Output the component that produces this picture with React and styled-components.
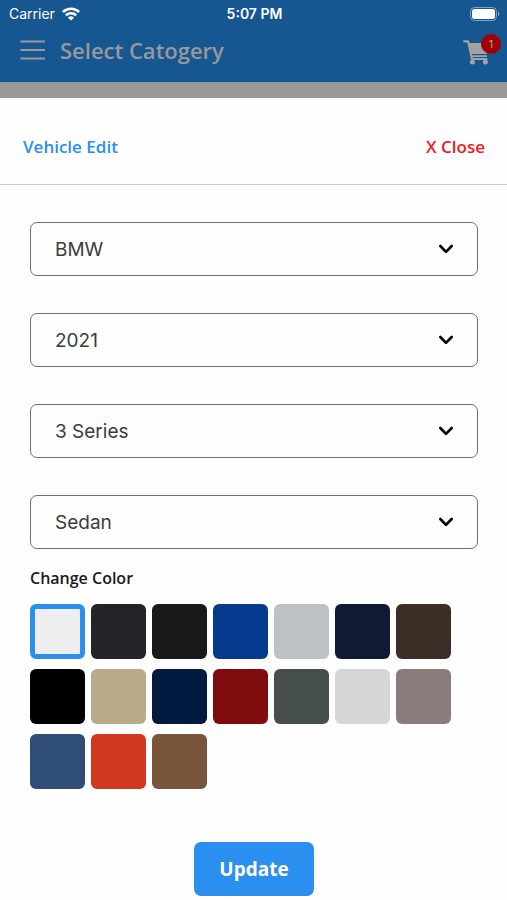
import React, { useState } from "react";
import styled, { createGlobalStyle } from "styled-components";

const GlobalStyle = createGlobalStyle`
	* {
		box-sizing: border-box;
	}

	body {
		margin: 0;
		background: #fefefe;
		font-family: "Open Sans", sans-serif;
	}
`;

const Container = styled.div`
	display: flex;
	flex-direction: column;
	min-height: 100vh;
	background: #999999;
`;

const Top = styled.header`
	height: 82px;
	background: #165691;
`;

const StatusBar = styled.div`
	display: grid;
	grid-template-columns: 1fr auto 1fr;
	align-items: center;
	height: 27px;
	padding: 0 7px 0 9px;
	color: white;
	font-family: Inter, sans-serif;
	font-size: 14px;
	line-height: 27px;
`;

const Carrier = styled.div`
	display: flex;
	align-items: center;
	gap: 7px;
`;

const Time = styled.div`
	font-weight: 600;
`;

const Battery = styled.svg`
	justify-self: end;
	display: block;
`;

const NavBar = styled.div`
	display: flex;
	align-items: center;
	height: 46px;
	padding: 0 18px 0 20px;
`;

const IconButton = styled.button`
	display: flex;
	position: relative;
	padding: 0;
	border: none;
	background: none;
	cursor: pointer;
`;

const Title = styled.h1`
	flex: 1;
	margin: 0 0 0 14px;
	color: #999999;
	font-size: 22px;
	font-weight: 600;
	line-height: 30px;
`;

const Badge = styled.span`
	position: absolute;
	top: -1px;
	right: -12px;
	width: 20px;
	height: 20px;
	border-radius: 50%;
	background: #a30006;
	color: #a3a3a3;
	font-family: Inter, sans-serif;
	font-size: 11px;
	line-height: 20px;
	text-align: center;
`;

const Sheet = styled.main`
	flex: 1;
	margin-top: 16px;
	background: #fefefe;
`;

const SheetHead = styled.div`
	display: flex;
	align-items: center;
	justify-content: space-between;
	height: 87px;
	padding: 12px 22px 0 23px;
	border-bottom: 1px solid #cccccc;
`;

const SheetTitle = styled.h2`
	margin: 0;
	color: #2a8fee;
	font-size: 17px;
	font-weight: 600;
	line-height: 24px;
`;

const Close = styled.button`
	padding: 0;
	border: none;
	background: none;
	color: #f0191c;
	font-family: inherit;
	font-size: 17px;
	font-weight: 600;
	line-height: 24px;
	cursor: pointer;
`;

const Form = styled.form`
	display: flex;
	flex-direction: column;
	gap: 37px;
	padding: 37px 29px 4px 30px;
`;

const Field = styled.label`
	display: grid;
	align-items: center;

	> * {
		grid-area: 1 / 1;
	}
`;

const Select = styled.select`
	appearance: none;
	width: 100%;
	height: 54px;
	padding: 0 56px 0 24px;
	border: 1px solid #6e6e6e;
	border-radius: 7px;
	background: transparent;
	color: #3c3c3c;
	font-family: Inter, sans-serif;
	font-size: 19px;
`;

const Chevron = styled.svg`
	justify-self: end;
	margin-right: 24px;
	pointer-events: none;
`;

const Colors = styled.fieldset`
	min-width: 0;
	margin: -20px 0 0;
	padding: 0;
	border: none;
`;

const Legend = styled.legend`
	margin-bottom: 14px;
	padding: 0;
	color: #1a1a1a;
	font-size: 16px;
	font-weight: 600;
	line-height: 24px;
`;

const Swatches = styled.div`
	display: flex;
	flex-wrap: wrap;
	gap: 10px 6px;
`;

const Swatch = styled.input`
	appearance: none;
	width: 55px;
	height: 55px;
	margin: 0;
	border-radius: 6px;
	background: ${(props) => props.$color};
	cursor: pointer;

	&:checked {
		border: 5px solid #2a8fee;
	}
`;

const Update = styled.button`
	align-self: center;
	margin-top: 16px;
	padding: 12px 25px;
	border: none;
	border-radius: 7px;
	background: #2a8fee;
	color: white;
	font-family: inherit;
	font-size: 19px;
	font-weight: 700;
	line-height: 30px;
	cursor: pointer;
`;

const fields = [
	{ name: "Make", options: ["BMW"] },
	{ name: "Year", options: ["2021"] },
	{ name: "Model", options: ["3 Series"] },
	{ name: "Body", options: ["Sedan"] },
];

const colors = [
	"#eeeeee",
	"#222428",
	"#191919",
	"#053b8f",
	"#bcc1c4",
	"#101a35",
	"#3b2e26",
	"#000000",
	"#b8ab8c",
	"#001b3f",
	"#800c0f",
	"#474f4e",
	"#d6d6d6",
	"#897c7c",
	"#304d79",
	"#d13820",
	"#78563c",
];

const App = () => {
	const [color, setColor] = useState(colors[0]);

	return (
		<Container>
			<GlobalStyle />
			<Top>
				<StatusBar>
					<Carrier>
						Carrier
						<svg width="18" height="14" viewBox="0 0 18 14" fill="none" stroke="white" strokeWidth="2.6">
							<path d="M0.9 5a11.6 11.6 0 0 1 16.2 0" />
							<path d="M3.9 8.4a7.3 7.3 0 0 1 10.2 0" />
							<path d="M9 13.6 6 10.7a4.3 4.3 0 0 1 6 0z" fill="white" stroke="none" />
						</svg>
					</Carrier>
					<Time>5:07 PM</Time>
					<Battery width="30" height="14" viewBox="0 0 30 14">
						<rect x="0.5" y="0.5" width="26" height="13" rx="4" fill="none" stroke="#7fa3c5" />
						<rect x="2" y="2" width="23" height="10" rx="2.5" fill="white" />
						<path d="M28 4.8a2.4 2.4 0 0 1 0 4.4z" fill="#7fa3c5" />
					</Battery>
				</StatusBar>
				<NavBar>
					<IconButton aria-label="Menu">
						<svg width="26" height="20" viewBox="0 0 26 20" stroke="#999999" strokeWidth="2">
							<path d="M0.5 1.5h24.5M0.5 10h24.5M0.5 18.5h24.5" />
						</svg>
					</IconButton>
					<Title>Select Catogery</Title>
					<IconButton aria-label="Cart">
						<svg width="26" height="30" viewBox="0 0 26 30" fill="#a3a3a3">
							<path d="M1.2 6.3h3.9L9 24h14.5" fill="none" stroke="#a3a3a3" strokeWidth="2.2" strokeLinecap="round" strokeLinejoin="round" />
							<path d="M6 8h19.2L23.6 19H8.2z" />
							<path d="M8 20.3h16v1.6H8.4z" />
							<circle cx="9.4" cy="27" r="2.5" />
							<circle cx="22.4" cy="27" r="2.5" />
						</svg>
						<Badge>1</Badge>
					</IconButton>
				</NavBar>
			</Top>
			<Sheet>
				<SheetHead>
					<SheetTitle>Vehicle Edit</SheetTitle>
					<Close type="button">X Close</Close>
				</SheetHead>
				<Form onSubmit={(e) => e.preventDefault()}>
					{fields.map((field) => (
						<Field key={field.name}>
							<Select aria-label={field.name}>
								{field.options.map((option) => (
									<option key={option}>{option}</option>
								))}
							</Select>
							<Chevron width="16" height="12" viewBox="0 0 16 12" fill="none" stroke="black" strokeWidth="2.6" strokeLinecap="round" strokeLinejoin="round">
								<path d="M2.3 3 8 8.8 13.7 3" />
							</Chevron>
						</Field>
					))}
					<Colors>
						<Legend>Change Color</Legend>
						<Swatches>
							{colors.map((item) => (
								<Swatch
									key={item}
									type="radio"
									name="color"
									aria-label={item}
									$color={item}
									checked={color === item}
									onChange={() => setColor(item)}
								/>
							))}
						</Swatches>
					</Colors>
					<Update type="submit">Update</Update>
				</Form>
			</Sheet>
		</Container>
	);
};

export default App;
